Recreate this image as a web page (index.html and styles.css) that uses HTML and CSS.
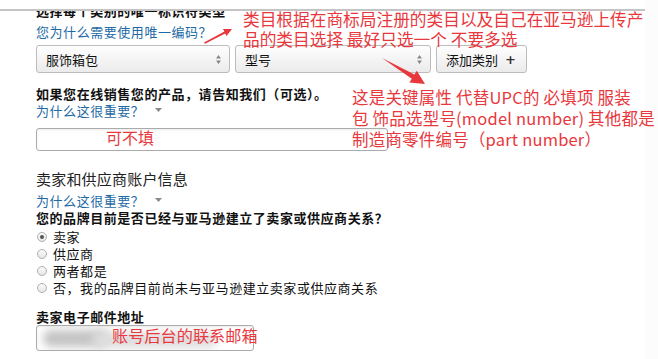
FILE: index.html
```html
<!DOCTYPE html>
<html lang="zh">
<head>
<meta charset="utf-8">
<link rel="stylesheet" href="styles.css">
</head>
<body>
<div class="screen">
  <div class="topgap"></div>
  <div class="rule"></div>
  <div class="page">
    <div class="cut">选择每个类别的唯一标识符类型</div>
    <div class="help"><span class="link">您为什么需要使用唯一编码？</span><svg class="caret" width="7" height="4" viewBox="0 0 7 4"><path d="M0 0H7L3.5 4Z" fill="#8a8a8a"/></svg></div>
    <div class="selrow">
      <div class="select s1"><span>服饰箱包</span><svg class="updown" width="5" height="9" viewBox="0 0 5 9"><path d="M0 3.5L2.5 0L5 3.5ZM0 5.5H5L2.5 9Z" fill="#888"/></svg></div>
      <div class="select s2"><span>型号</span><svg class="updown" width="5" height="9" viewBox="0 0 5 9"><path d="M0 3.5L2.5 0L5 3.5ZM0 5.5H5L2.5 9Z" fill="#888"/></svg></div>
      <div class="btn">添加类别<span class="plus">+</span></div>
    </div>
    <div class="label l1">如果您在线销售您的产品，请告知我们（可选）。</div>
    <div class="help h2"><span class="link">为什么这很重要？</span><svg class="caret" width="7" height="4" viewBox="0 0 7 4"><path d="M0 0H7L3.5 4Z" fill="#8a8a8a"/></svg></div>
    <div class="input i1"></div>
    <div class="section">卖家和供应商账户信息</div>
    <div class="help h3"><span class="link">为什么这很重要？</span><svg class="caret" width="7" height="4" viewBox="0 0 7 4"><path d="M0 0H7L3.5 4Z" fill="#8a8a8a"/></svg></div>
    <div class="label l2">您的品牌目前是否已经与亚马逊建立了卖家或供应商关系？</div>
    <ul class="radios">
      <li><span class="radio checked"></span>卖家</li>
      <li><span class="radio"></span>供应商</li>
      <li><span class="radio"></span>两者都是</li>
      <li><span class="radio"></span>否，我的品牌目前尚未与亚马逊建立卖家或供应商关系</li>
    </ul>
    <div class="label l3">卖家电子邮件地址</div>
    <div class="input i2"><div class="blur b1"></div><div class="blur b2"></div></div>
  </div>

  <div class="note n1">类目根据在商标局注册的类目以及自己在亚马逊上传产<br>品的类目选择 最好只选一个 不要多选</div>
  <div class="note n2">这是关键属性 代替UPC的 必填项 服装<br>包 饰品选型号(model number) 其他都是<br>制造商零件编号（part number）</div>
  <div class="note n3">可不填</div>
  <div class="note n4">账号后台的联系邮箱</div>

  <svg class="arrows" width="658" height="359" viewBox="0 0 658 359">
    <polygon points="204,42.6 224.4,31.6 223.1,28.9 232,29 226.5,36.1 225.2,33.4 205,43.8" fill="#e8383d"/>
    <polygon points="382,58 414.4,74.5 416.8,70.7 425,84 409.4,82.5 411.8,78.7" fill="#e8383d"/>
  </svg>
</div>
</body>
</html>
```
FILE: styles.css
```css
html, body {
  margin: 0;
  padding: 0;
}
body {
  font-family: "Noto Sans CJK SC", "Liberation Sans", sans-serif;
  background: #fcfcfc;
}
.screen {
  position: relative;
  width: 658px;
  height: 359px;
  overflow: hidden;
  background: #fcfcfc;
}
.topgap {
  width: 645px;
  height: 9px;
  background: #fff;
}
.rule {
  width: 645px;
  height: 2px;
  background: #c4c4c4;
}
.page {
  width: 645px;
  height: 348px;
  box-sizing: border-box;
  padding-left: 36px;
  background: #fff;
  overflow: hidden;
  font-size: 13px;
  letter-spacing: 0.55px;
  color: #111;
}
.cut {
  margin-top: -8px;
  line-height: 16px;
  font-weight: 700;
}
.help {
  display: flex;
  align-items: center;
  margin-top: 5px;
  line-height: 16px;
}
.link {
  color: #1d6aa5;
}
.caret {
  margin-left: 11px;
  margin-top: -3px;
}
.selrow {
  display: flex;
  gap: 5px;
  margin-top: 5px;
  height: 28px;
  letter-spacing: 0;
}
.select, .btn {
  display: flex;
  align-items: center;
  height: 28px;
  box-sizing: border-box;
  border: 1px solid #bcbcbc;
  border-radius: 3px;
  background: linear-gradient(#fefefe, #ebebeb);
  font-size: 13px;
  color: #111;
}
.select {
  justify-content: space-between;
  padding: 0 8px 0 9px;
}
.s1 { width: 194px; }
.s2 { width: 196px; }
.btn {
  width: 91px;
  padding-left: 9px;
}
.plus {
  margin-left: 7px;
  font-family: "DejaVu Sans", sans-serif;
  font-weight: 700;
  font-size: 13px;
  color: #333;
}
.label {
  font-weight: 700;
  line-height: 16px;
}
.l1 { margin-top: 13px; }
.h2 { margin-top: 1px; }
.input {
  position: relative;
  box-sizing: border-box;
  border: 1px solid #ababab;
  border-radius: 3px;
  background: #fff;
  box-shadow: inset 0 1px 2px rgba(0, 0, 0, 0.08);
}
.i1 {
  width: 352px;
  height: 23px;
  margin-top: 9px;
}
.section {
  margin-top: 18px;
  font-size: 15px;
  line-height: 20px;
  letter-spacing: 0.2px;
  color: #222;
}
.h3 { margin-top: 4px; }
.l2 { margin-top: 1px; }
.radios {
  list-style: none;
  margin: 2px 0 0;
  padding: 0 0 0 1px;
}
.radios li {
  display: flex;
  align-items: center;
  height: 17px;
  line-height: 17px;
}
.radio {
  position: relative;
  width: 10px;
  height: 10px;
  box-sizing: border-box;
  border: 1px solid #b0b0b0;
  border-radius: 50%;
  background: linear-gradient(#fafafa, #e6e6e6);
  margin-right: 6px;
}
.radio.checked::after {
  content: "";
  position: absolute;
  left: 2px;
  top: 2px;
  width: 4px;
  height: 4px;
  border-radius: 50%;
  background: #555;
}
.l3 { margin-top: 13px; }
.i2 {
  width: 218px;
  height: 26px;
  overflow: hidden;
}
.blur {
  position: absolute;
  border-radius: 8px;
  filter: blur(4px);
}
.b1 {
  left: 6px;
  top: 4px;
  width: 66px;
  height: 17px;
  background: #c4c4c4;
}
.b2 {
  left: 55px;
  top: 6px;
  width: 125px;
  height: 16px;
  background: #dedede;
}
.note {
  position: absolute;
  color: #e8383d;
  font-family: "Noto Sans CJK SC", sans-serif;
  white-space: nowrap;
}
.n1 {
  left: 243px;
  top: 10px;
  font-size: 16.7px;
  line-height: 19.5px;
}
.n2 {
  left: 352px;
  top: 87px;
  font-size: 16.5px;
  line-height: 21px;
  letter-spacing: 0.2px;
}
.n3 {
  left: 106px;
  top: 128px;
  font-size: 16px;
  line-height: 18px;
}
.n4 {
  left: 112px;
  top: 326px;
  font-size: 16.2px;
  line-height: 18px;
}
.arrows {
  position: absolute;
  left: 0;
  top: 0;
  pointer-events: none;
}
```
